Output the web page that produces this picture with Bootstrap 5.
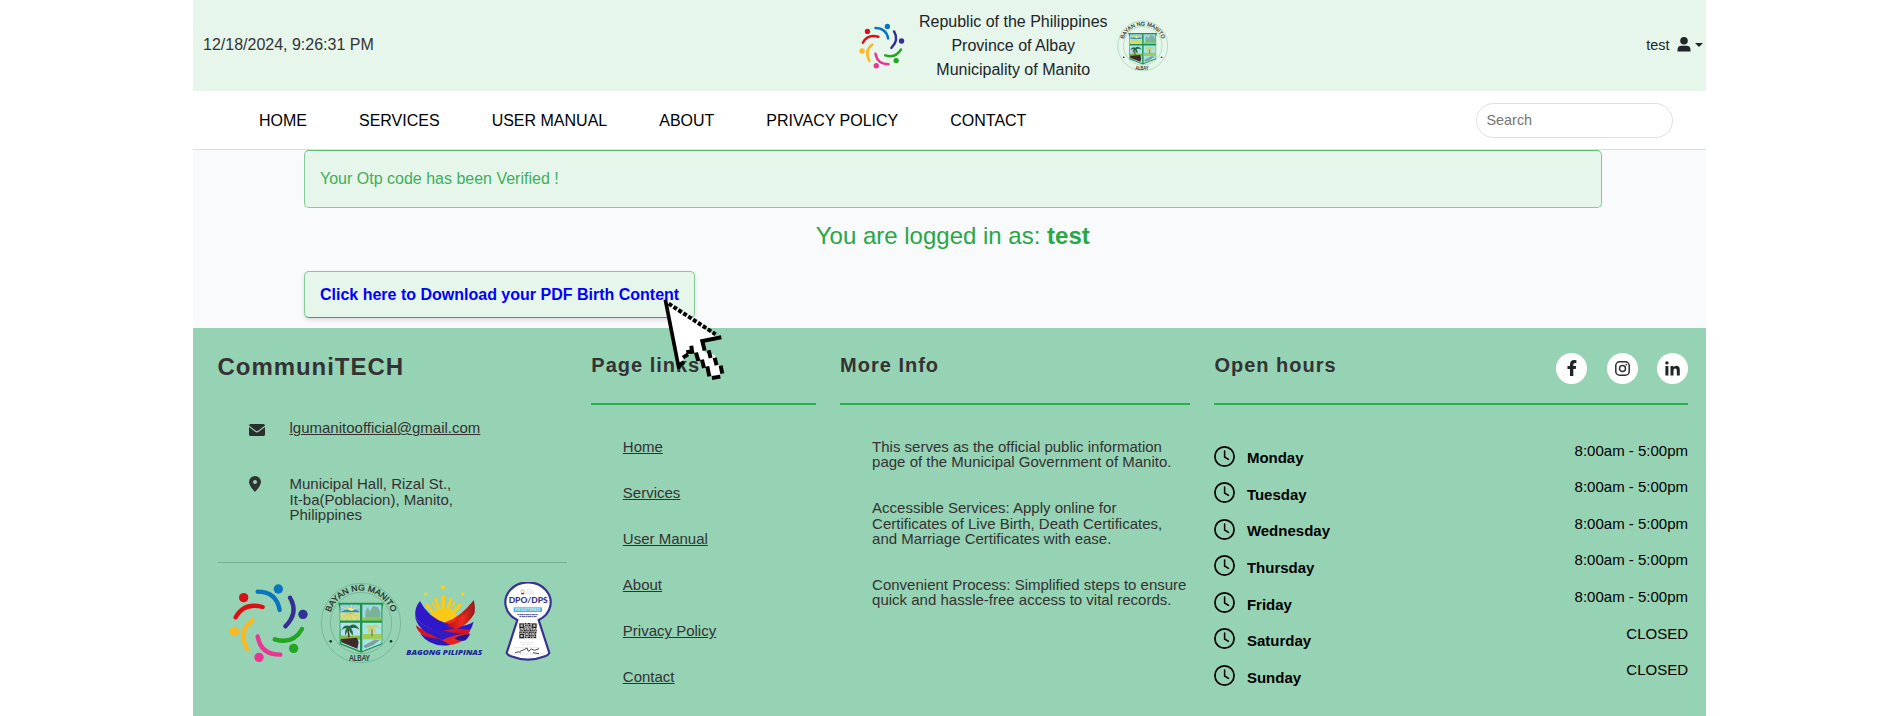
<!DOCTYPE html>
<html lang="en">
<head>
<meta charset="utf-8">
<meta name="viewport" content="width=device-width, initial-scale=1">
<title>CommuniTECH</title>
<link href="https://cdn.jsdelivr.net/npm/bootstrap@5.3.0/dist/css/bootstrap.min.css" rel="stylesheet">
<style>
body{font-family:"Liberation Sans",Arial,sans-serif;background:#fff;color:#212529;height:716px;overflow:hidden}
.page{width:1512.5px;margin-left:193px;height:716px;position:relative;background:#f9fafc}
.topbar{height:91px;background:#e6f6eb;padding:0 3px 0 10px;font-size:16px;line-height:24px}
.clock{width:655.5px;color:#333;padding-bottom:1px}
.gov{width:212.5px;padding:1px 0 0 5px}
.user{font-size:14.4px;gap:7px;padding-bottom:2px}
.caret{border:4px solid transparent;border-top-color:#212529;border-bottom:0}
.menu{height:59px;background:#fff;border-bottom:1px solid #dcdfe2;padding-left:66px;padding-right:33px}
.menu .links{gap:52px;padding-top:2px}
.menu a{color:#000;text-decoration:none;font-size:16px;line-height:24px}
.search{width:197px;height:35px;border:1px solid #dfdfe1;border-radius:17.5px;padding:0 10px;font-size:14.4px}
.search::placeholder{color:#757575;opacity:1}
.main{padding:0 104px 0 111px;height:178px}
.notice{height:57.5px;border:1px solid #82cb95;border-top-color:#5dbd75;border-radius:5px;background:#e6f6eb;color:#3fae5a;padding:0 15px;margin:0;line-height:56px;font-size:16px}
.logged{color:#28a745;font-size:24px;line-height:28px;padding-top:14.5px;height:63px}
.dl{display:inline-block;height:47px;width:391px;border:1px solid #82cb95;border-bottom-color:#3aa556;border-radius:5px;background:#e6f6eb;color:#00f;font-weight:700;text-decoration:none;padding:0 15px;line-height:46px;font-size:16px;box-shadow:0 2px 4px rgba(0,0,0,.13);white-space:nowrap}
.foot{height:388px;background:#96d2b4;color:#333;padding:0 17.5px 0 24.5px;display:grid;grid-template-columns:349.5px 224.5px 350px 1fr;column-gap:24.3px;font-size:15px;line-height:15.1px}
.brand{font-size:24px;font-weight:700;letter-spacing:.95px;line-height:30px;margin:24px 0 0;height:62px}
.hd{font-size:20px;font-weight:700;letter-spacing:1px;line-height:24px;padding-top:24.5px;height:77px;border-bottom:2px solid #2cb04d;margin:0}
.contact{padding-left:31.5px}
.contact .ic{width:40.5px}
.mail{padding-top:6.3px}
.addr{padding-top:40.2px}
.foot a{color:#333}
.plinks{padding:34px 0 0 31.5px;margin:0;list-style:none}
.plinks li{height:46.1px}
.info{padding:34px 0 0 32px}
.info p{margin:0 0 31.3px;white-space:nowrap}
.sep{border-top:1px solid #7bae94;margin:40px 0 19px;height:1px}
.disc{width:31px;height:31px;border-radius:50%;background:#fff}
.socials{gap:19.5px}
.hours{list-style:none;margin:0;padding:34px 0 0;color:#000;font-size:15px}
.hours li{height:36.6px}
.hours b{padding:11.3px 0 0 11.5px}
.hours .t{padding-top:3.6px;margin-left:auto}
.hours svg{margin-top:6.5px}
.cursor{position:absolute;left:470.3px;top:298.3px;z-index:5}
</style>
</head>
<body>
<svg width="0" height="0" class="position-absolute">
<defs>
<symbol id="swirl" viewBox="55 100 240 240">
<g fill="none" stroke-width="13" stroke-linecap="round">
<path stroke="#0a74bd" d="M141 126Q197 126 207 181"/><path stroke="#332f93" d="M238 144Q265 190 224 230"/><path stroke="#23a522" d="M274 238Q247 286 192 269"/><path stroke="#ea3593" d="M141 260Q150 315 209 315"/><path stroke="#fdb721" d="M125 212Q80 247 110 298"/><path stroke="#dc1014" d="M75 203Q100 157 156 172"/></g>
<circle cx="203" cy="118" r="14" fill="#0a74bd"/><circle cx="277" cy="194" r="14" fill="#332f93"/><circle cx="249" cy="296" r="14" fill="#23a522"/><circle cx="145" cy="323" r="14" fill="#ea3593"/><circle cx="71" cy="246" r="14" fill="#fdb721"/><circle cx="99" cy="144" r="14" fill="#dc1014"/>
</symbol>
<symbol id="seal" viewBox="330 93 246 246">
<circle cx="453" cy="216" r="119" fill="none" stroke="#5aa583" stroke-width="1.6"/>
<circle cx="453" cy="216" r="92" fill="none" stroke="#5aa583" stroke-width="1.6"/>
<path id="arcTop" fill="none" d="M356 216a97 97 0 0 1 194 0"/>
<text font-family="Liberation Sans,sans-serif" font-size="25" fill="#1c2b24" stroke="#1c2b24" stroke-width=".7"><textPath href="#arcTop" startOffset="50%" text-anchor="middle" textLength="240" lengthAdjust="spacingAndGlyphs">BAYAN NG MANITO</textPath></text>
<text x="449" y="331" text-anchor="middle" font-family="Liberation Sans,sans-serif" font-size="25" textLength="62" lengthAdjust="spacingAndGlyphs" fill="#1c2b24" stroke="#1c2b24" stroke-width=".7">ALBAY</text>
<circle cx="362" cy="271" r="4" fill="#153c2b"/><circle cx="543" cy="271" r="4" fill="#153c2b"/>
<path d="M384 155h137q-6 18-4 40v85l-64 25-64-25v-85q1-25-5-40z" fill="#1e9448"/>
<path d="M391 161h59v47h-59z" fill="#8fcbe8"/><path d="M391 184h59v24h-59z" fill="#d9dd7c"/><path d="M405 184q15-28 33 0z" fill="#ffe95c"/><path d="M391 184l20-9 14 5 12-5 13 9z" fill="#2d8fb5"/><path d="M392 167l20 8M408 162l8 13M424 161v12M438 162l-8 13M449 167l-18 9" stroke="#ffe95c" stroke-width="2"/><path d="M391 208l30-22 5 22M410 208l14-22 25 22M391 197l28-11 30 11" stroke="#a9b55c" fill="none"/>
<path d="M457 161h57v47h-57z" fill="#a3d8e4"/><path d="M466 180l8-12 5 14 10-17 15 3 7 15v17h-45z" fill="#79b39b"/><path d="M457 200h57v8h-57z" fill="#8ac84b"/>
<path d="M391 215h59v84l-57-22z" fill="#b6dff2"/><path d="M391 254h59v12h-59z" fill="#86b943"/><path d="M417 228q-4 16 0 31" stroke="#4f3d29" stroke-width="5" fill="none"/><path d="M394 239q7-20 24-14 16-13 31 11-15-9-26-4 8 10 5 22-9-10-11-20-7 7-11 21-3-17 4-23-9-2-16 7z" fill="#1d6d3a"/><path d="M393 264l48-4 5 14-4 19-48-19z" fill="#402a29"/>
<path d="M457 215h58v62l-58 23z" fill="#a4e5ea"/><path d="M457 249h58v16h-58z" fill="#9dcc59"/><path d="M486 225v31" stroke="#9c8743" stroke-width="5"/><path d="M463 233q14-19 23-8 14-12 25 8-14-7-18-2 8 8 6 18-12-7-13-17-3 9-12 17-3-15 4-20z" fill="#cbcf76"/><path d="M460 284l34-18 16 1-21 16-24 9z" fill="#829e9f"/>
</symbol>
<linearGradient id="gr" x1="0" x2="1"><stop offset="0" stop-color="#b20b20"/><stop offset=".55" stop-color="#f02d19"/><stop offset="1" stop-color="#9c1620"/></linearGradient>
<symbol id="bagong" viewBox="585 100 235 225">
<path d="M697 105l2 5 6 0-4 4 2 6-6-3-5 3 2-6-5-4 6 0zM645 125l2 5 6 0-4 4 2 6-6-3-5 3 2-6-5-4 6 0zM756 125l2 5 6 0-4 4 2 6-6-3-5 3 2-6-5-4 6 0z" fill="#fdd314" transform="translate(2 0)"/>
<g stroke="#fcca16" stroke-linecap="round"><path d="M700 141V180" stroke-width="11"/><path d="M677 149L688 182M723 149L712 182" stroke-width="9"/><path d="M651 167L672 190M749 167L728 190" stroke-width="10"/><path d="M666 158L680 184M734 158L720 184" stroke-width="4"/></g><ellipse cx="700" cy="206" rx="42" ry="29" fill="#fcca16"/>
<path d="M792 151q4 22 1 40-17 33-55 48l-98 16q35-10 67-38 42-12 85-66z" fill="url(#gr)"/>
<path d="M630 154q23 48 78 67 46 18 83-5-4 17-14 32-27 13-65 2-83-16-96-52-3-23 14-44z" fill="#3017c9"/>
<path d="M792 158q3 20 1 33-17 33-55 48l-30-12q50-15 84-69z" fill="url(#gr)"/>
<path d="M618 226q17 19 67 20l50-10q22 3 46 4l-6 14q-40 5-71 20-55 0-78-29-8-9-8-19z" fill="#d31524"/>
<path d="M615 198q19 38 88 46 31 9 76 7-9 12-20 22-48 11-93-17-45-18-51-58z" fill="#311bc4"/>
<path d="M691 274q45-22 88-23-24 37-75 36z" fill="#e52320"/><path d="M629 251q26 16 54 16 19 5 37 19-57 10-91-35z" fill="#2c18bd"/><path d="M734 266q27-15 47-12-7 11-14 18-20 5-33-6z" fill="#1d1899"/>
<text x="589" y="315" font-family="Open Sans,Liberation Sans,sans-serif" font-size="21" font-weight="800" font-style="italic" textLength="228" lengthAdjust="spacingAndGlyphs" fill="#1c2697">BAGONG PILIPINAS</text>
</symbol>
<symbol id="dpo" viewBox="878 95 150 243">
<path d="M921 209a68 60 0 1 1 64 0l32 99q-4 7-13 10-51 20-102 0-9-3-13-10z" fill="#fff" stroke="#383391" stroke-width="6.5"/>
<circle cx="937" cy="123" r="5" fill="none" stroke="#e68b45" stroke-width="2"/><path d="M932 128h10v4h-10z" fill="#5050a5"/><path d="M946 119h21M946 125h26M946 130h23" stroke="#b4b5c2"/>
<text x="895" y="159" font-family="Lato,sans-serif" font-size="20" font-weight="900" textLength="117" lengthAdjust="spacingAndGlyphs" fill="#343486">DPO/DPS</text>
<path d="M910 171h85v14h-85z" fill="#43b6df"/>
<text x="914" y="183" font-family="Lato,sans-serif" font-size="13" font-weight="700" textLength="76" lengthAdjust="spacingAndGlyphs" fill="#d7f1fa">REGISTERED</text>
<path d="M921 193h63M927 199h52" stroke="#4a4b91" stroke-width="3" stroke-dasharray="6 1 10 1"/>
<path d="M926 218h53v47h-53z" fill="#c8c8c8"/>
<g fill="none" stroke="#222" stroke-width="3.5"><path d="M929 221h10v10h-10zM967 221h10v10h-10zM929 252h10v10h-10z"/><path stroke-dasharray="4 2 2 2 6 2" d="M943 220h20M945 225h19M942 230h22M928 236h50M930 241h49M927 246h51M943 251h36M945 256h32M943 261h35"/></g>
<path d="M929 276h42M935 282h29M911 292h80M901 311h101" stroke="#aaa" stroke-dasharray="9 2"/><path d="M929 303l12-5 9-5 4 10 9-7 10 4 13-5M914 307l12-3 5 4M968 307l18 3" fill="none" stroke="#222" stroke-width="2.4"/>
</symbol>
<symbol id="clk" viewBox="0 0 21 21"><circle cx="10.5" cy="10.5" r="9.6" fill="none" stroke="#000" stroke-width="1.7"/><path d="M10.6 5v6l3.9 2.4" fill="none" stroke="#000" stroke-width="1.5" stroke-linecap="round"/></symbol>
</defs>
</svg>

<div class="page">
<header class="topbar d-flex align-items-center">
  <div class="clock">12/18/2024, 9:26:31 PM</div>
  <svg width="46" height="46"><use href="#swirl"/></svg>
  <div class="gov text-center">Republic of the Philippines<br>Province of Albay<br>Municipality of Manito</div>
  <svg width="51.5" height="51.5"><use href="#seal"/></svg>
  <div class="user d-flex align-items-center ms-auto"><span>test</span>
    <svg width="14" height="15" viewBox="0 0 14 15"><circle cx="7" cy="3.8" r="3.8" fill="#212529"/><path d="M.5 14.5V13q0-4.3 4-4.3h5q4 0 4 4.3v1.5z" fill="#212529"/></svg>
    <span class="caret" style="margin-left:-3px"></span></div>
</header>

<nav class="menu d-flex align-items-center">
  <div class="links d-flex"><a href="#">HOME</a><a href="#">SERVICES</a><a href="#">USER MANUAL</a><a href="#">ABOUT</a><a href="#">PRIVACY POLICY</a><a href="#">CONTACT</a></div>
  <input class="search ms-auto" type="text" placeholder="Search">
</nav>

<main class="main">
  <div class="notice">Your Otp code has been Verified !</div>
  <div class="logged text-center">You are logged in as: <b>test</b></div>
  <a class="dl" href="#">Click here to Download your PDF Birth Content</a>
</main>

<footer class="foot">
  <section>
    <h4 class="brand">CommuniTECH</h4>
    <div class="contact mail d-flex">
      <div class="ic"><svg width="16" height="12" viewBox="0 0 16 12" class="d-block mt-1"><path d="M1.5 0h13Q16 0 16 1.5L9.2 6.8q-1.200.9-2.400 0L0 1.5Q0 0 1.5 0zM0 3l6.2 4.800q1.800 1.300 3.600 0L16 3v7.500q0 1.500-1.500 1.500h-13Q0 12 0 10.500z" fill="#2b302e"/></svg></div>
      <a href="#">lgumanitoofficial@gmail.com</a>
    </div>
    <div class="contact addr d-flex">
      <div class="ic"><svg width="12" height="16" viewBox="0 0 12 16" class="d-block"><path fill-rule="evenodd" d="M6 0a6 6 0 0 1 6 6c0 3-4 8-6 10C4 14 0 9 0 6a6 6 0 0 1 6-6zm0 4a2 2 0 1 0 0 4 2 2 0 0 0 0-4z" fill="#2f3331"/></svg></div>
      <div>Municipal Hall, Rizal St.,<br>It-ba(Poblacion), Manito,<br>Philippines</div>
    </div>
    <div class="sep"></div>
    <div class="d-flex">
      <svg width="80" height="80" style="margin-left:11px;margin-top:1px"><use href="#swirl"/></svg>
      <svg width="82" height="82" style="margin-left:11.5px"><use href="#seal"/></svg>
      <svg width="78.3" height="75" style="margin-left:3px;margin-top:1.5px"><use href="#bagong"/></svg>
      <svg width="50" height="81" style="margin-left:19.5px;margin-top:.5px"><use href="#dpo"/></svg>
    </div>
  </section>
  <section>
    <h5 class="hd">Page links</h5>
    <ul class="plinks"><li><a href="#">Home</a></li><li><a href="#">Services</a></li><li><a href="#">User Manual</a></li><li><a href="#">About</a></li><li><a href="#">Privacy Policy</a></li><li><a href="#">Contact</a></li></ul>
  </section>
  <section>
    <h5 class="hd">More Info</h5>
    <div class="info">
      <p>This serves as the official public information<br>page of the Municipal Government of Manito.</p>
      <p>Accessible Services: Apply online for<br>Certificates of Live Birth, Death Certificates,<br>and Marriage Certificates with ease.</p>
      <p>Convenient Process: Simplified steps to ensure<br>quick and hassle-free access to vital records.</p>
    </div>
  </section>
  <section>
    <div class="hd d-flex align-items-start"><span class="me-auto">Open hours</span>
      <div class="socials d-flex">
        <span class="disc d-flex align-items-center justify-content-center"><svg width="10" height="16" viewBox="0 0 10 16"><path d="M3 16V9H.5V6H3V4.500C3 1.700 4.500.1 7 .1q1.500 0 2.400.2v2.600H8Q6.300 2.900 6.300 4.600V6h2.900l-.5 3H6.300v7z" fill="#212529"/></svg></span>
        <span class="disc d-flex align-items-center justify-content-center"><svg width="15" height="15" viewBox="0 0 15 15" fill="none" stroke="#2c2f33"><rect x=".8" y=".8" width="13.4" height="13.4" rx="3.8" stroke-width="1.500"/><circle cx="7.500" cy="7.500" r="3" stroke-width="1.500"/><circle cx="11.300" cy="3.700" r=".5"/></svg></span>
        <span class="disc d-flex align-items-center justify-content-center"><svg width="15" height="15" viewBox="0 0 15 15" fill="#212529"><circle cx="1.900" cy="1.900" r="1.700"/><path d="M.4 5h3v9.500h-3zM5.500 5h2.900v1.300Q9.400 4.800 11.300 4.800q3.500 0 3.500 4.200v5.500h-3V9.700q0-2.300-1.600-2.300-1.700 0-1.700 2.200v4.900h-3z"/></svg></span>
      </div>
    </div>
    <ul class="hours">
      <li class="d-flex align-items-start"><svg width="21" height="21"><use href="#clk"/></svg><b>Monday</b><span class="t">8:00am - 5:00pm</span></li>
      <li class="d-flex align-items-start"><svg width="21" height="21"><use href="#clk"/></svg><b>Tuesday</b><span class="t">8:00am - 5:00pm</span></li>
      <li class="d-flex align-items-start"><svg width="21" height="21"><use href="#clk"/></svg><b>Wednesday</b><span class="t">8:00am - 5:00pm</span></li>
      <li class="d-flex align-items-start"><svg width="21" height="21"><use href="#clk"/></svg><b>Thursday</b><span class="t">8:00am - 5:00pm</span></li>
      <li class="d-flex align-items-start"><svg width="21" height="21"><use href="#clk"/></svg><b>Friday</b><span class="t">8:00am - 5:00pm</span></li>
      <li class="d-flex align-items-start"><svg width="21" height="21"><use href="#clk"/></svg><b>Saturday</b><span class="t">CLOSED</span></li>
      <li class="d-flex align-items-start"><svg width="21" height="21"><use href="#clk"/></svg><b>Sunday</b><span class="t">CLOSED</span></li>
    </ul>
  </section>
</footer>

<!-- mouse pointer -->
<svg class="cursor" width="63.3" height="83.3" viewBox="100 505 190 250">
<path d="M107 515L265 624L217 634L226 668L255 676L276 730L254 744L235 728L204 672L187 660L147 706Z" fill="#fff"/>
<path d="M107 510L148 718" stroke="#000" stroke-width="11" fill="none"/>
<path d="M117 522L258 614" stroke="#000" stroke-width="12" stroke-dasharray="12 5.5" fill="none"/>
<path d="M275 623L218 634L225 663M144 708L163 698M160 684L175 674M170 668L192 664M185 648L188 672" stroke="#000" stroke-width="12" fill="none"/>
<path d="M199 669L206 694M217 690L223 715M233 710L239 740M237 662L243 685M255 684L261 707M273 708L278 732M247 745L272 741" stroke="#000" stroke-width="12" fill="none"/>
</svg>
</div>
<script src="https://cdn.jsdelivr.net/npm/bootstrap@5.3.0/dist/js/bootstrap.bundle.min.js"></script>
</body>
</html>
